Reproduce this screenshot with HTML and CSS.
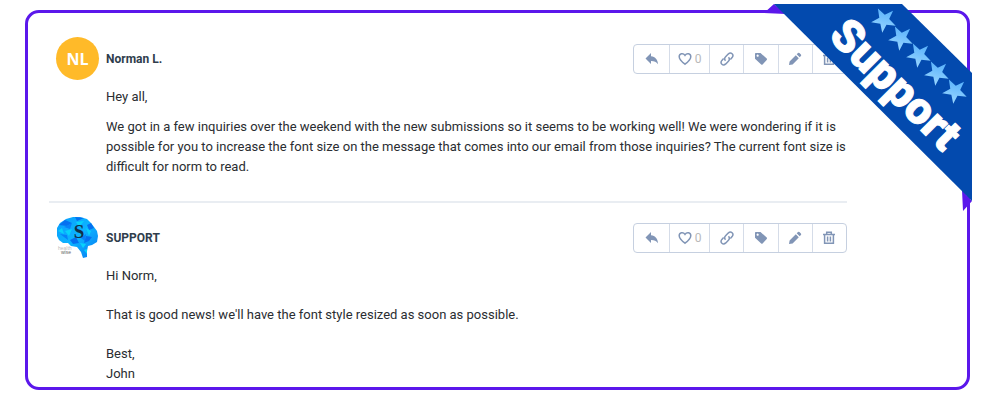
FILE: index.html
```html
<!DOCTYPE html>
<html lang="en">
<head>
    <meta charset="UTF-8">
    <meta name="viewport" content="width=device-width, initial-scale=1.0">
    <title>Support</title>
    <link rel="stylesheet" href="styles.css">
</head>
<body>
    <!-- shared icons -->
    <svg class="icons">
        <symbol id="reply" viewBox="0 0 14 14"><path d="M6 1v3.2c4.400.5 6.600 3.200 7 8C11.300 9.800 9 8.800 6 8.900V12L0.500 6.500z"/></symbol>
        <symbol id="heart" viewBox="0 0 14 14"><path class="line" d="M7 12.200C3.500 9.500 1.200 7.300 1.200 4.700c0-3.200 4-4 5.800-1.300 1.800-2.700 5.800-1.900 5.800 1.300 0 2.600-2.300 4.800-5.800 7.500z"/></symbol>
        <symbol id="link" viewBox="0 0 14 14"><path class="line" d="M5.500 8.700C4.300 7.400 4.400 6 5.600 4.800l2.600-2.700c2.800-2.600 6.200.6 3.900 3.500l-1.700 1.800M8.500 5.300c1.200 1.300 1.100 2.700-.1 3.900l-2.600 2.700c-2.800 2.600-6.200-.6-3.900-3.500l1.700-1.800"/></symbol>
        <symbol id="tag" viewBox="0 0 14 14"><path fill-rule="evenodd" d="M1.800 1h4.700l6.200 5.600q.7.700 0 1.400l-4.100 4.400q-.7.600-1.400 0L1 6.700V1.800Q1 1 1.800 1zM3.600 2.600a1.100 1.100 0 1 0 .1 0z"/></symbol>
        <symbol id="pencil" viewBox="0 0 14 14"><path d="M1 13l.6-3.600 6.200-6.200 3 3L4.600 12.400zM8.700 2.300l1.300-1.200q.7-.6 1.400 0l1.500 1.500q.7.700 0 1.400l-1.200 1.300z"/></symbol>
        <symbol id="trash" viewBox="0 0 14 14"><path class="line" d="M1 3.500h12M4.700 3V1.200h4.600V3M2.600 4v8.300h8.800V4M5.600 5.500v5M8.400 5.500v5"/></symbol>
    </svg>

    <main class="card">
        <article class="message">
            <header class="message-header">
                <div class="avatar">NL</div>
                <h2 class="name">Norman L.</h2>
                <div class="toolbar">
                    <button type="button" aria-label="Reply"><svg><use href="#reply"/></svg></button>
                    <button type="button" aria-label="Like"><svg><use href="#heart"/></svg><span>0</span></button>
                    <button type="button" aria-label="Copy link"><svg><use href="#link"/></svg></button>
                    <button type="button" aria-label="Tag"><svg><use href="#tag"/></svg></button>
                    <button type="button" aria-label="Edit"><svg><use href="#pencil"/></svg></button>
                    <button type="button" aria-label="Delete"><svg><use href="#trash"/></svg></button>
                </div>
            </header>
            <div class="message-body">
                <p>Hey all,</p>
                <p>We got in a few inquiries over the weekend with the new submissions so it seems to be working well! We were wondering if it is possible for you to increase the font size on the message that comes into our email from those inquiries? The current font size is difficult for norm to read.</p>
            </div>
        </article>

        <article class="message">
            <header class="message-header">
                <svg class="logo" viewBox="0 0 43 43">
                    <defs>
                        <linearGradient id="brain" x1="0" y1="0" x2="1" y2="1">
                            <stop offset="0" stop-color="#0a9dfd"/>
                            <stop offset="0.5" stop-color="#0cb4ff"/>
                            <stop offset="1" stop-color="#0879f2"/>
                        </linearGradient>
                    </defs>
                    <path fill="url(#brain)" d="M1 18l0-6 3-5 6-4 7-2 7 0 7 2 4 4 3 4 3 4 1 5-1 6-5 3-4 1-1 5 0 6-4 1-2-6-4-5-6-1-3-3-5 0-4-3-2-4z"/>
                    <path fill="#0570f0" d="M3 9l6-5 7 3-5 3zM19 1l9 1-7 3zM31 9l4-2 3 5-5 2zM14 24l6-3 3 6-6 1zM30 20l6 1-3 4-5 2z"/>
                    <path fill="#08d2fb" d="M20 6l8-1-5 6zM9 15l7-2-3 7zM2 15l4-3 2 6zM30 12l5 3-2 5zM24 27l6 1-3 4zM28 34l3-1v5z"/>
                    <path fill="#0781f8" d="M8 11l8-4-2 6zM4 18l7 1 1 5zM25 22l5-4-1 7z"/>
                    <text class="logo-letter" x="23" y="22">S</text>
                    <text class="logo-light" x="2" y="34">health</text>
                    <text class="logo-dark" x="5" y="38">wise</text>
                </svg>
                <h2 class="name">SUPPORT</h2>
                <div class="toolbar">
                    <button type="button" aria-label="Reply"><svg><use href="#reply"/></svg></button>
                    <button type="button" aria-label="Like"><svg><use href="#heart"/></svg><span>0</span></button>
                    <button type="button" aria-label="Copy link"><svg><use href="#link"/></svg></button>
                    <button type="button" aria-label="Tag"><svg><use href="#tag"/></svg></button>
                    <button type="button" aria-label="Edit"><svg><use href="#pencil"/></svg></button>
                    <button type="button" aria-label="Delete"><svg><use href="#trash"/></svg></button>
                </div>
            </header>
            <div class="message-body spaced">
                <p>Hi Norm,</p>
                <p>That is good news! we'll have the font style resized as soon as possible.</p>
                <p>Best,<br>John</p>
            </div>
        </article>

        <!-- corner ribbon -->
        <svg class="ribbon" viewBox="0 0 210 210">
            <defs>
                <linearGradient id="shine" x1="0" y1="1" x2="1" y2="0">
                    <stop offset="0" stop-color="#a4dcff"/>
                    <stop offset="1" stop-color="#45a7fb"/>
                </linearGradient>
                <path id="star" fill="url(#shine)" d="M0-13L3.100-4.200 12.400-4 5 1.600 7.600 10.500 0 5.300-7.600 10.500-5 1.600-12.400-4-3.100-4.200z"/>
            </defs>
            <path fill="#5b17eb" d="M2 9L12 0l12 10zM200 186l10 11-9 10z"/>
            <path fill="#034aae" d="M12 0h128l70 69v128z"/>
            <text class="ribbon-text" transform="translate(123 91) rotate(45)">Support</text>
            <use href="#star" transform="translate(122 16) rotate(-28)"/>
            <use href="#star" transform="translate(139 34) rotate(-28)"/>
            <use href="#star" transform="translate(157 51) rotate(-28)"/>
            <use href="#star" transform="translate(175 69) rotate(-28)"/>
            <use href="#star" transform="translate(193 87) rotate(-28)"/>
        </svg>
    </main>
</body>
</html>
```
FILE: styles.css
```css
* {
    box-sizing: border-box;
}
body {
    margin: 0;
    padding: 10px 30px 10px 25px;
    background-color: #fff;
    color: #2a2d31;
    font-family: Roboto, Arial, sans-serif;
    font-size: 13px;
    line-height: 20px;
}
.icons {
    display: none;
}
.card {
    position: relative;
    padding: 24px 120px 3px 21px;
    border: 3px solid #5b17eb;
    border-radius: 14px;
}
.message + .message {
    margin-top: 24px;
    padding-top: 13px;
    border-top: 2px solid #e9edf2;
}
.message-header {
    display: flex;
    align-items: center;
    padding-left: 7px;
}
.avatar,
.logo {
    flex: none;
    width: 43px;
    height: 43px;
    margin-right: 7px;
}
.avatar {
    display: flex;
    align-items: center;
    justify-content: center;
    border-radius: 50%;
    background-color: #ffba29;
    color: #fff;
    font-family: "Open Sans", sans-serif;
    font-size: 16px;
    font-weight: 700;
}
.logo-letter {
    fill: #123049;
    font: 700 19px "Liberation Serif", serif;
    text-anchor: middle;
}
.logo-light,
.logo-dark {
    fill: #bbb;
    font: 5px "Liberation Sans", sans-serif;
}
.logo-dark {
    fill: #666;
}
.name {
    margin: 0;
    color: #2f3d4c;
    font-size: 12px;
    font-weight: 700;
}
.toolbar {
    display: grid;
    grid-template-columns: 35px 40px repeat(4, 1fr);
    width: 214px;
    height: 30px;
    margin-left: auto;
    border: 1px solid #c6d0e0;
    border-radius: 4px;
}
.toolbar button {
    display: flex;
    align-items: center;
    justify-content: center;
    gap: 3px;
    padding: 0;
    border: none;
    background: none;
    color: #8195b6;
    font: 12px Roboto, sans-serif;
    cursor: pointer;
}
.toolbar button + button {
    border-left: 1px solid #d5dce8;
}
.toolbar button:hover {
    background-color: #f4f6fa;
}
.toolbar svg {
    width: 14px;
    height: 14px;
    fill: currentColor;
}
.toolbar span {
    color: #b9b9b9;
}
.line {
    fill: none;
    stroke: currentColor;
    stroke-width: 1.5;
}
.message-body {
    padding-left: 57px;
    padding-top: 7px;
}
.message-body p {
    margin: 0;
}
.message-body p + p {
    margin-top: 10px;
}
.spaced p + p {
    margin-top: 19px;
}
.ribbon {
    position: absolute;
    top: -9px;
    right: -5px;
    width: 210px;
    height: 210px;
}
.ribbon-text {
    fill: #fff;
    stroke: #fff;
    stroke-width: 1;
    font: 900 45px Roboto, sans-serif;
    text-anchor: middle;
}
```
